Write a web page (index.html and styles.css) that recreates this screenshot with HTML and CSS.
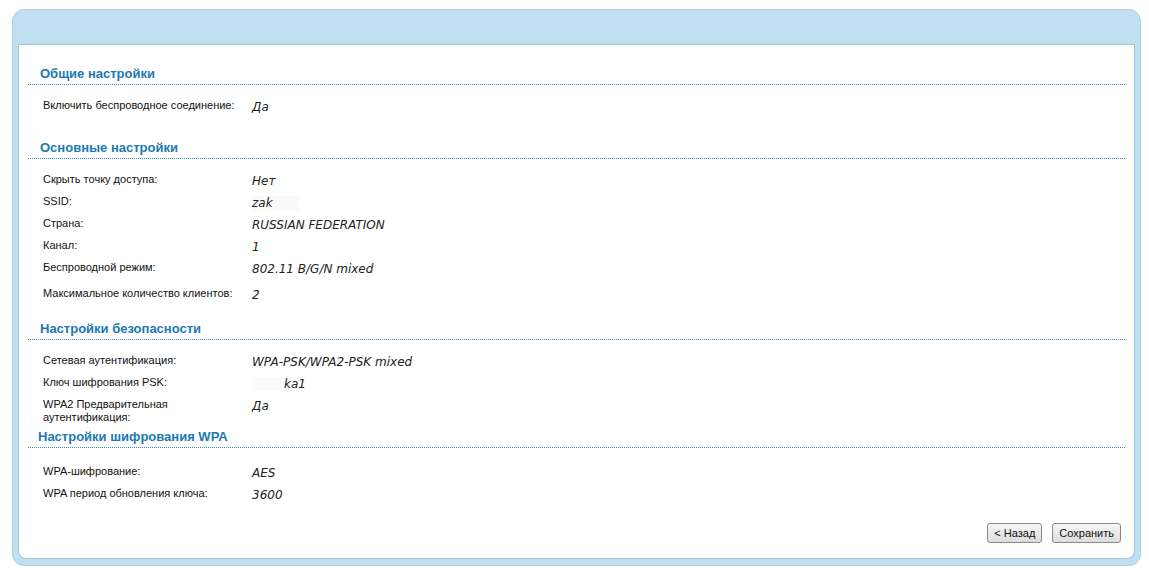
FILE: index.html
```html
<!DOCTYPE html>
<html lang="ru">
<head>
    <meta charset="UTF-8">
    <title>Беспроводная сеть</title>
    <link rel="stylesheet" href="styles.css">
</head>
<body>
    <div class="panel">
        <div class="panel-head"></div>
        <div class="panel-body">

            <h2 class="section-title">Общие настройки</h2>
            <div class="rows first">
                <div class="row">
                    <span class="label">Включить беспроводное соединение:</span>
                    <span class="value">Да</span>
                </div>
            </div>

            <h2 class="section-title">Основные настройки</h2>
            <div class="rows basic">
                <div class="row">
                    <span class="label">Скрыть точку доступа:</span>
                    <span class="value">Нет</span>
                </div>
                <div class="row">
                    <span class="label">SSID:</span>
                    <span class="value"><span class="masked">zak</span></span>
                </div>
                <div class="row">
                    <span class="label">Страна:</span>
                    <span class="value">RUSSIAN FEDERATION</span>
                </div>
                <div class="row">
                    <span class="label">Канал:</span>
                    <span class="value">1</span>
                </div>
                <div class="row">
                    <span class="label">Беспроводной режим:</span>
                    <span class="value">802.11 B/G/N mixed</span>
                </div>
                <div class="row tall">
                    <span class="label">Максимальное количество клиентов:</span>
                    <span class="value">2</span>
                </div>
            </div>

            <h2 class="section-title">Настройки безопасности</h2>
            <div class="rows security">
                <div class="row">
                    <span class="label">Сетевая аутентификация:</span>
                    <span class="value">WPA-PSK/WPA2-PSK mixed</span>
                </div>
                <div class="row">
                    <span class="label">Ключ шифрования PSK:</span>
                    <span class="value"><span class="masked key">ka1</span></span>
                </div>
                <div class="row">
                    <span class="label">WPA2 Предварительная<br>аутентификация:</span>
                    <span class="value">Да</span>
                </div>
            </div>

            <h2 class="section-title wpa">Настройки шифрования WPA</h2>
            <div class="rows cipher">
                <div class="row">
                    <span class="label">WPA-шифрование:</span>
                    <span class="value">AES</span>
                </div>
                <div class="row">
                    <span class="label">WPA период обновления ключа:</span>
                    <span class="value">3600</span>
                </div>
            </div>

            <div class="buttons">
                <button type="button" class="btn">&lt; Назад</button>
                <button type="button" class="btn">Сохранить</button>
            </div>
        </div>
    </div>
</body>
</html>
```

FILE: styles.css
```css
body {
    margin: 0;
    padding: 9px 8px 10px 12px;
    background-color: #fff;
    font-family: "Liberation Sans", Arial, sans-serif;
}

.panel {
    width: 1129px;
    height: 557px;
    box-sizing: border-box;
    display: flex;
    flex-direction: column;
    background-color: #c0dff0;
    border: 1px solid #aed0e4;
    border-radius: 12px;
    padding: 0 5px 6px 5px;
}

.panel-head {
    height: 34px;
    flex-shrink: 0;
    border-bottom: 1px solid #a3c6dc;
}

.panel-body {
    flex-grow: 1;
    min-height: 0;
    overflow: hidden;
    background-color: #fff;
    border-left: 1px solid #a3c6dc;
    border-right: 1px solid #a3c6dc;
    border-bottom: 1px solid #a3c6dc;
    border-radius: 0 0 8px 8px;
    padding: 0 9px 0 9px;
    display: flex;
    flex-direction: column;
}

.section-title {
    margin: 0;
    padding: 0 0 2px 12px;
    font-size: 13px;
    font-weight: bold;
    color: #1c79b4;
    border-bottom: 1px dotted #3b8aa8;
    line-height: 16px;
}

.panel-body > .section-title:first-child {
    margin-top: 21px;
}

.section-title.wpa {
    padding-left: 10px;
}

.rows {
    padding: 14px 0 12px 15px;
}

.rows.first {
    padding-bottom: 19px;
}

.rows.security {
    padding-bottom: 5px;
}

.rows.cipher {
    padding-top: 17px;
}

.row {
    display: flex;
    align-items: flex-start;
    min-height: 22px;
}

.row.tall {
    padding-top: 4px;
}

.label {
    width: 209px;
    flex-shrink: 0;
    font-size: 11px;
    line-height: 13px;
    color: #111;
}

.value {
    font-family: "DejaVu Sans", Verdana, sans-serif;
    font-style: italic;
    font-size: 12px;
    line-height: 14px;
    color: #222;
    padding-top: 1px;
}

.masked {
    display: inline-block;
    background-color: #fafafa;
    padding-right: 26px;
}

.masked.key {
    padding-left: 32px;
    padding-right: 0;
}

.buttons {
    margin-top: auto;
    margin-bottom: 15px;
    display: flex;
    justify-content: flex-end;
    gap: 10px;
    padding-right: 4px;
}

.btn {
    font-family: "Liberation Sans", Arial, sans-serif;
    font-size: 11px;
    height: 20px;
    padding: 0 6px;
    background: linear-gradient(#f6f6f6, #dcdcdc);
    border: 1px solid #8a8a8a;
    border-radius: 3px;
    color: #111;
}
```
